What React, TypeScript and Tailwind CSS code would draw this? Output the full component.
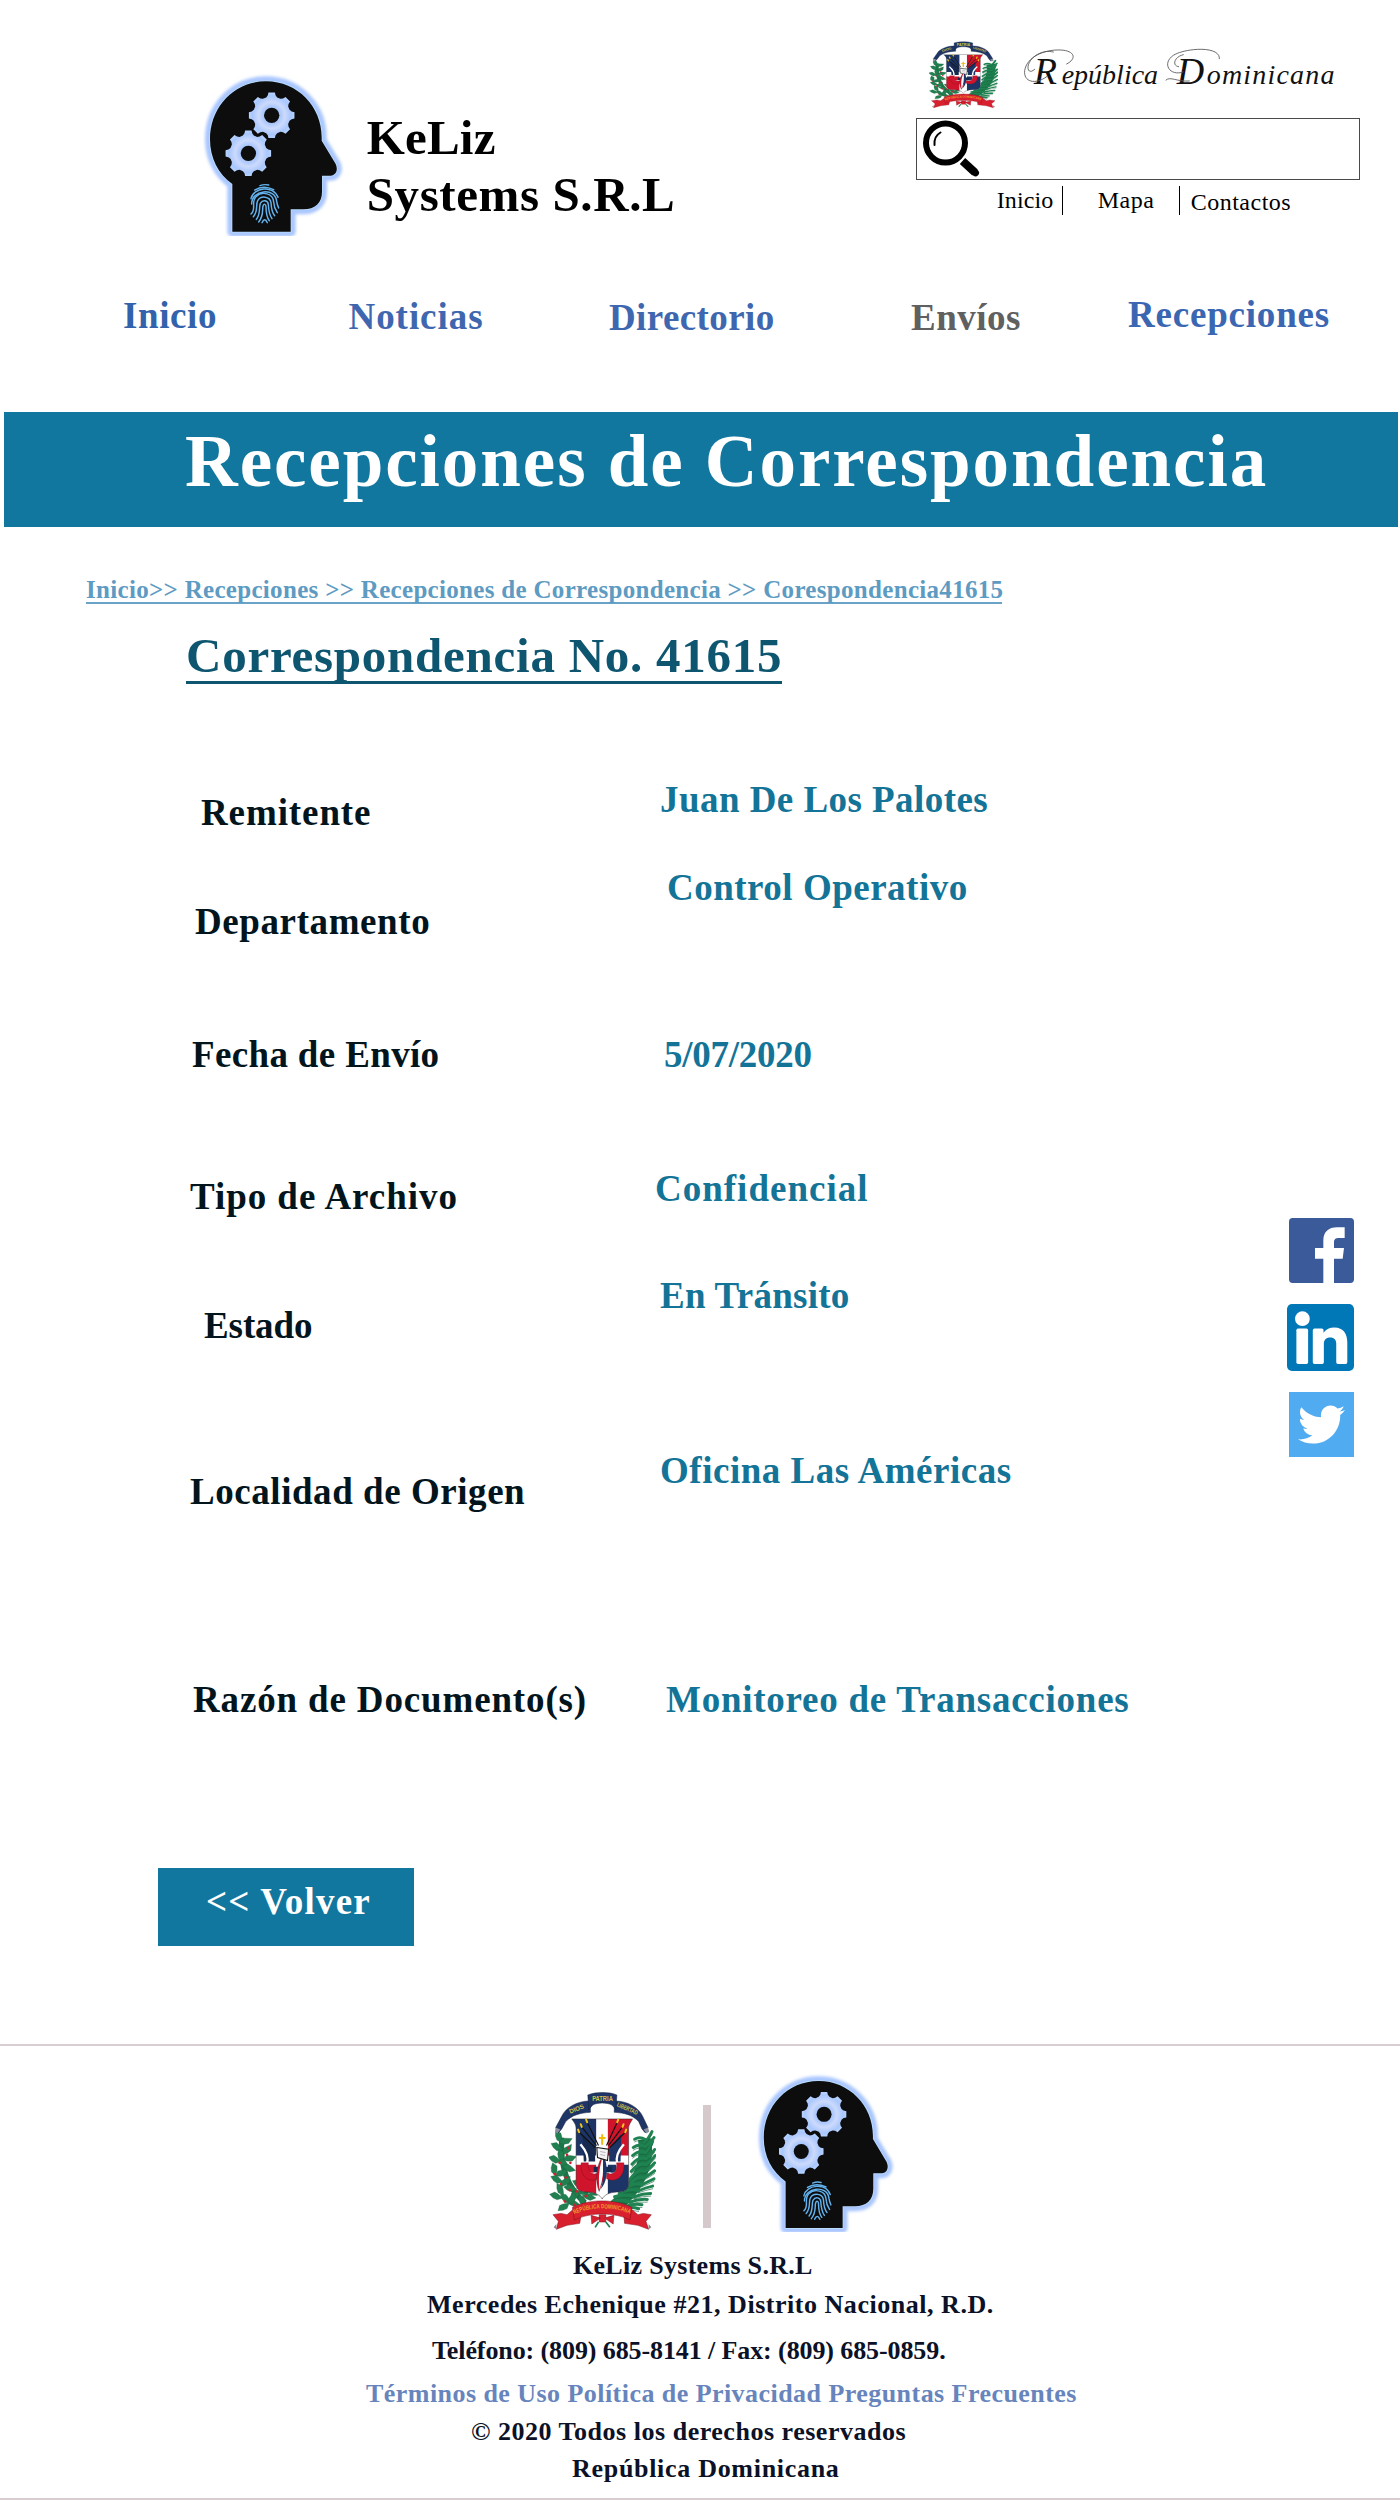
import { FaTwitter } from 'react-icons/fa';

function gearPath(cx: number, cy: number, outer: number, body: number) {
  const pts: string[] = [];
  const at = (r: number, deg: number) => {
    const a = (deg * Math.PI) / 180;
    return `${(cx + r * Math.cos(a)).toFixed(1)} ${(cy + r * Math.sin(a)).toFixed(1)}`;
  };
  for (let i = 0; i < 8; i++) {
    const d = i * 45;
    pts.push(`${at(body, d - 17)} L${at(outer - 8, d - 11)} L${at(outer, d - 8)} L${at(outer, d + 8)} L${at(outer - 8, d + 11)} L${at(body, d + 17)}`);
  }
  return `M${pts.join(' L')} Z`;
}

const HEAD =
  'M157 545 V402 C115 372 90 325 90 268 C90 170 163 94 258 94 C353 94 425 170 425 262 V272 L467 342 C475 360 468 376 452 377 H426 V425 C426 458 405 478 370 478 H332 V545 Z';

const RIDGES = [
  'M240 407 Q252 402 266 405',
  'M224 420 Q250 404 281 419',
  'M213 446 C220 412 280 404 294 442',
  'M215 462 C214 420 286 410 290 454 Q291 462 296 474',
  'M213 492 C230 478 212 456 228 440 C246 422 280 430 281 456 C282 474 288 482 292 488',
  'M220 500 C236 482 226 466 233 452 C242 436 270 438 273 458 C274 478 278 490 284 497',
  'M229 508 C243 490 236 472 241 460 C248 448 264 450 265 464 C266 484 268 494 276 506',
  'M236 516 C252 496 246 480 249 468 C252 460 258 462 258 470 C258 490 259 500 268 512',
  'M246 518 Q254 500 262 518',
];

function Gear({ cx, cy, id }: { cx: number; cy: number; id: string }) {
  return (
    <g>
      <defs>
        <radialGradient id={id} gradientUnits="userSpaceOnUse" cx={cx} cy={cy} r="68">
          <stop offset="0.33" stopColor="#a4c3fb" />
          <stop offset="0.58" stopColor="#ccdafc" />
          <stop offset="0.85" stopColor="#a9c7fd" />
          <stop offset="1" stopColor="#b5d2ff" />
        </radialGradient>
      </defs>
      <path d={gearPath(cx, cy, 69, 56)} fill={`url(#${id})`} stroke="#0d0d0d" strokeWidth="10" paintOrder="stroke" strokeLinejoin="round" />
      <circle cx={cx} cy={cy} r="23" fill="#0d0d0d" />
    </g>
  );
}

function HeadLogo({ className, id }: { className: string; id: string }) {
  return (
    <svg className={className} viewBox="60 60 440 497" preserveAspectRatio="none" aria-label="KeLiz Systems">
      <defs>
        <filter id={`${id}-glow`} x="-20%" y="-20%" width="140%" height="140%">
          <feGaussianBlur stdDeviation="5" />
        </filter>
      </defs>
      <path d={HEAD} fill="#a9c6ff" stroke="#a9c6ff" strokeWidth="30" strokeLinejoin="round" filter={`url(#${id}-glow)`} />
      <path d={HEAD} fill="#0d0d0d" stroke="#b9dcff" strokeWidth="5" paintOrder="stroke" />
      <Gear cx={275} cy={196} id={`${id}-g1`} />
      <Gear cx={205} cy={310} id={`${id}-g2`} />
      <g fill="none" stroke="#63b3ee" strokeWidth="4.4" strokeLinecap="round">
        {RIDGES.map((d) => (
          <path key={d} d={d} />
        ))}
      </g>
    </svg>
  );
}

const LEAVES: [number, number, number][] = [
  [42, 158, 60], [62, 170, -20], [36, 188, 30], [66, 196, -50], [48, 214, 70], [74, 222, -15], [30, 226, 20], [58, 240, 40],
  [28, 256, 75], [50, 266, -30], [72, 252, 20], [36, 286, 25], [62, 292, -50], [46, 316, 60], [76, 312, 10], [92, 330, -40],
  [34, 336, 15], [62, 344, 40], [100, 300, 30], [118, 322, -20], [84, 356, 15], [56, 368, -35], [112, 350, 55], [132, 338, 10],
  [128, 306, -60], [140, 322, 35], [82, 342, -70],
];
const BERRIES: [number, number][] = [
  [70, 192], [44, 236], [76, 236], [30, 270], [62, 280], [48, 300], [74, 318], [96, 322], [60, 352], [88, 362], [122, 336], [104, 312], [66, 212],
];
const FRONDS: [number, number, number, number][] = [
  [300, 150, 268, 165], [298, 158, 320, 142], [300, 172, 264, 190], [300, 172, 326, 160], [302, 190, 262, 214], [302, 190, 322, 172],
  [304, 208, 260, 240], [304, 208, 328, 196], [303, 226, 258, 262], [303, 226, 330, 214], [300, 246, 254, 286], [300, 246, 328, 236],
  [296, 266, 250, 306], [296, 266, 328, 260], [290, 286, 236, 318], [290, 286, 326, 284], [280, 304, 222, 328], [280, 304, 322, 306],
  [268, 322, 208, 338], [268, 322, 316, 328], [254, 338, 204, 352], [254, 338, 306, 346], [240, 352, 290, 362], [230, 360, 280, 374],
];
const SHIELD =
  'M80 104 H262 C256 116 250 120 250 134 V300 C250 318 236 324 214 324 C192 325 178 332 171 345 C164 332 150 325 128 324 C106 324 93 318 93 300 V134 C93 120 88 116 80 104 Z';

function CoatOfArms({ className, id }: { className: string; id: string }) {
  return (
    <svg className={className} viewBox="12 20 320 424" preserveAspectRatio="none" aria-label="Escudo de la República Dominicana">
      <defs>
        <clipPath id={`${id}-shield`}>
          <path d={SHIELD} />
        </clipPath>
        <path id={`${id}-arc`} d="M88 391 C130 367 210 367 256 391" />
      </defs>
      {/* laurel branch */}
      <path d="M50 160 C46 220 52 300 120 356" fill="none" stroke="#1c7547" strokeWidth="16" />
      {LEAVES.map(([x, y, r]) => (
        <path key={`${x}-${y}`} d="M-16 0 L-6 -8 L2 -6 L16 0 L4 8 L-6 6 Z" transform={`translate(${x} ${y}) rotate(${r}) scale(1.3)`} fill="#227f50" stroke="#135c37" strokeWidth="0.6" />
      ))}
      {BERRIES.map(([x, y]) => (
        <circle key={`${x}-${y}`} cx={x} cy={y} r="4" fill="#d0202c" />
      ))}
      {/* palm branch */}
      <path d="M298 165 C308 230 290 300 206 370" fill="none" stroke="#1d7a4a" strokeWidth="40" />
      {FRONDS.map(([x1, y1, x2, y2]) => (
        <g key={`${x1}-${y1}-${x2}`} fill="none" strokeLinecap="round">
          <path d={`M${x1} ${y1 + 16} Q${(x1 + x2) / 2} ${y1 + 6} ${x2} ${y2}`} stroke="#1f8351" strokeWidth="9" />
          <path d={`M${x1} ${y1 + 22} Q${(x1 + x2) / 2} ${y1 + 14} ${x2} ${y2 + 8}`} stroke="#145f3a" strokeWidth="1.8" />
        </g>
      ))}
      {/* shield */}
      <g clipPath={`url(#${id}-shield)`}>
        <rect x="78" y="100" width="190" height="250" fill="#fff" />
        <path d="M80 104 H153 V214 H80 Z" fill="#1d3566" />
        <path d="M188 104 H262 V214 H188 Z" fill="#cf142b" />
        <path d="M80 242 H153 V350 H80 Z" fill="#cf142b" />
        <path d="M188 242 H262 V350 H188 Z" fill="#1d3566" />
        <path d="M112 150 L150 190 V232 H116 Z" fill="#16294f" />
        <path d="M228 150 L192 190 V232 H226 Z" fill="#1d3566" />
        <path d="M106 180 C122 198 132 218 126 240 C120 262 136 278 154 264" fill="none" stroke="#fff" strokeWidth="7" />
        <path d="M236 180 C220 198 210 218 216 240 C222 262 206 278 190 264" fill="none" stroke="#fff" strokeWidth="7" />
        <path d="M108 236 C104 282 134 296 160 284 V266 C140 276 126 262 130 236 Z" fill="#cf142b" stroke="#7d0c1a" strokeWidth="1" />
        <path d="M236 236 C240 282 210 296 184 284 V266 C204 276 218 262 214 236 Z" fill="#cf142b" stroke="#7d0c1a" strokeWidth="1" />
        <path d="M146 248 H200 V264 H146 Z" fill="#16294f" />
      </g>
      <path d={SHIELD} fill="none" stroke="#222" strokeWidth="1.5" />
      {/* spears */}
      {[[102, 144, 150, 190], [110, 128, 154, 184], [126, 114, 160, 184], [240, 144, 194, 190], [232, 128, 190, 184], [216, 114, 184, 184]].map(([a, b, c, d]) => (
        <g key={a}>
          <path d={`M${a} ${b} L${c} ${d}`} stroke="#111" strokeWidth="3.5" />
          <path d={`M${a} ${b} l${a < 170 ? -3 : 3} -8`} stroke="#f5c518" strokeWidth="6" strokeLinecap="round" />
        </g>
      ))}
      <path d="M171 150 V182 M161 161 H181" stroke="#f2b90f" strokeWidth="6" />
      {/* bible and ribbon */}
      <path d="M166 226 C150 262 152 296 162 322 C170 300 184 280 178 226 Z" fill="#cf142b" stroke="#222" strokeWidth="1" />
      <path d="M170 226 C160 262 160 290 163 316 C172 290 176 260 174 226 Z" fill="#fff" />
      <path d="M174 226 C172 260 178 292 166 316 C184 296 190 262 180 226 Z" fill="#1d3566" />
      <path d="M155 190 L190 195 L187 229 L157 220 Z" fill="#f4f4f4" stroke="#111" strokeWidth="3" />
      <path d="M165 202 L181 205 M165 211 L180 214" stroke="#999" strokeWidth="2" />
      {/* motto ribbon */}
      <g fill="#1f3566" stroke="#131f3d" strokeWidth="1.5">
        <path d="M135 50 C95 50 62 70 50 96 L32 130 L40 146 L50 134 L62 112 C82 92 105 86 136 84 Z" />
        <path d="M208 50 C248 50 280 70 292 96 L308 130 L300 146 L290 134 L280 112 C262 92 238 86 207 84 Z" />
        <path d="M128 32 C150 22 194 22 215 32 L212 76 L200 62 C184 54 158 54 143 62 L131 76 Z" />
      </g>
      <path d="M32 130 L30 142 L37 148 L46 136 Z M308 130 L312 142 L304 148 L295 136 Z" fill="#8a8f99" />
      <g className="font-['Liberation_Sans'] text-[19px] font-bold" fill="#d3c24a" textAnchor="middle">
        <text x="96" y="80" transform="rotate(-22 96 78)">DIOS</text>
        <text x="172" y="50" textLength="62" lengthAdjust="spacingAndGlyphs">PATRIA</text>
        <text x="246" y="80" textLength="66" lengthAdjust="spacingAndGlyphs" transform="rotate(24 248 74)">LIBERTAD</text>
      </g>
      {/* country ribbon */}
      <g fill="#d8202f" stroke="#7d0c1a" strokeWidth="1.5">
        <path d="M84 376 L66 392 L48 388 L24 392 L40 412 L34 436 L66 424 L104 418 L108 392 Z" />
        <path d="M259 376 L278 392 L294 388 L318 392 L302 412 L310 436 L278 424 L238 418 L236 392 Z" />
        <path d="M138 394 L166 402 L140 420 Z M206 394 L178 402 L204 420 Z M162 392 H182 V414 H162 Z" />
        <path d="M82 370 C130 344 212 344 260 370 L254 408 C212 384 132 384 88 408 Z" />
      </g>
      <path d="M34 436 L26 430 L34 420 Z M310 436 L318 430 L310 420 Z" fill="#888" />
      <path d="M160 414 L150 430 M182 414 L194 430" stroke="#1f7f4f" strokeWidth="5" />
      <text className="font-['Liberation_Sans'] text-[19px] font-bold" fill="#f19a2b">
        <textPath href={`#${id}-arc`} textLength="170" lengthAdjust="spacingAndGlyphs">REPÚBLICA DOMINICANA</textPath>
      </text>
    </svg>
  );
}

function ScriptTitle() {
  return (
    <div className="relative ml-[26px] mt-[5px] flex h-[50px] w-[316px] items-baseline font-['Liberation_Serif',serif] text-[28px] italic leading-[50px] text-[#111]">
      <span className="ml-[10px] w-[28px] text-[38px]">R</span>
      <span className="w-[115px]">epública</span>
      <span className="w-[30px] text-[38px]">D</span>
      <span className="tracking-[1.2px]">ominicana</span>
      <svg className="absolute -top-[1px] left-0 h-[50px] w-[316px]" viewBox="372 95 948 150" fill="none" stroke="#555" strokeWidth="2.6" strokeLinecap="round">
        <path d="M440 190 C405 216 370 205 374 172 C380 132 430 108 482 110 C524 112 532 136 500 152" />
        <path d="M404 168 C380 190 374 150 405 128 C425 114 445 112 460 116" />
        <path d="M798 200 C812 188 830 206 868 203" />
        <path d="M850 176 C808 190 785 150 820 126 C855 104 962 96 958 136" />
        <path d="M836 160 C815 158 822 130 850 124" />
      </svg>
    </div>
  );
}

const nav = [
  { label: 'Inicio', cls: 'ml-[123px] w-[225.5px] mt-[2px] tracking-[0.6px] text-[#3262ab]' },
  { label: 'Noticias', cls: 'w-[260.5px] mt-[3px] tracking-[0.95px] text-[#3f67af]' },
  { label: 'Directorio', cls: 'w-[302px] mt-[4px] tracking-[0.4px] text-[#3f67af]' },
  { label: 'Envíos', cls: 'w-[217px] mt-[4px] tracking-[0.5px] text-[#606060]' },
  { label: 'Recepciones', cls: 'mt-px tracking-[0.8px] text-[#3b66b2]' },
];

const rows = [
  { label: 'Remitente', value: 'Juan De Los Palotes', row: 'h-[90px]', dt: 'mt-6 ml-[11px] tracking-[0.9px]', dd: 'mt-[11px] ml-[5px] tracking-[0.45px]' },
  { label: 'Departamento', value: 'Control Operativo', row: 'h-[160px]', dt: 'mt-[43px] ml-[5px] tracking-[0.6px]', dd: 'mt-[9px] ml-[12px] tracking-[0.5px]' },
  { label: 'Fecha de Envío', value: '5/07/2020', row: 'h-[140px]', dt: 'mt-4 ml-[2px] tracking-[0.35px]', dd: 'mt-4 ml-[9px] tracking-[-0.25px]' },
  { label: 'Tipo de Archivo', value: 'Confidencial', row: 'h-[100px]', dt: 'mt-[18px] ml-0 tracking-[0.95px]', dd: 'mt-[10px] ml-0 tracking-[1px]' },
  { label: 'Estado', value: 'En Tránsito', row: 'h-[170px]', dt: 'mt-[47px] ml-[14px] tracking-[-0.1px]', dd: 'mt-[17px] ml-[5px] tracking-[0.25px]' },
  { label: 'Localidad de Origen', value: 'Oficina Las Américas', row: 'h-[210px]', dt: 'mt-[43px] ml-0 tracking-[0.55px]', dd: 'mt-[22px] ml-[5px] tracking-[0.52px]' },
  { label: 'Razón de Documento(s)', value: 'Monitoreo de Transacciones', row: 'h-[120px]', dt: 'mt-[41px] ml-[3px] tracking-[0.85px]', dd: 'mt-[41px] ml-[11px] tracking-[0.75px]' },
];

export default function App() {
  return (
    <div className="flex h-[2500px] w-[1400px] flex-col overflow-hidden whitespace-nowrap bg-white font-['Liberation_Serif',serif] font-bold text-black">
      <header className="flex h-[295px] shrink-0">
        <HeadLogo id="top" className="ml-[200px] mt-[70px] h-[165.7px] w-[146.7px] shrink-0" />
        <h1 className="ml-[20px] mt-[109px] w-[549px] text-[49px] leading-[57px]">
          <span className="block tracking-[0.2px]">KeLiz</span>
          <span className="block tracking-[0.6px]">Systems S.R.L</span>
        </h1>
        <div className="w-[444px] font-normal">
          <div className="flex h-[118px] pl-[13px] pt-[41px]">
            <CoatOfArms id="arms-top" className="h-[68px] w-[69px] shrink-0" />
            <ScriptTitle />
          </div>
          <div className="flex h-[62px] items-start border border-[#4a4a4a] bg-white pl-[6px] pt-[1px]">
            <svg className="size-[58px]" viewBox="0 0 58 58" fill="none" stroke="#000">
              <circle cx="22.5" cy="23" r="19.5" strokeWidth="6" />
              <path d="M11.5 25 C11 19 13 15 17.5 12.5" strokeWidth="2" strokeLinecap="round" />
              <path d="M39.5 41 L52 52.5" strokeWidth="8" />
              <path d="M50 50.5 L52.5 52.8" strokeWidth="7" strokeLinecap="round" />
            </svg>
          </div>
          <nav className="flex text-2xl leading-none">
            <a className="ml-[81px] mt-[8px] w-[65px] tracking-[0.1px]">Inicio</a>
            <span className="mt-[6px] h-[29px] w-px bg-black" />
            <a className="ml-[35px] mt-[8px] w-[81px] tracking-[0.5px]">Mapa</a>
            <span className="mt-[6px] h-[29px] w-px bg-black" />
            <a className="ml-[11px] mt-[10px] tracking-[0.5px]">Contactos</a>
          </nav>
        </div>
      </header>

      <nav className="flex h-[117px] shrink-0 text-[37px] leading-none">
        {nav.map((n) => (
          <a key={n.label} className={n.cls}>{n.label}</a>
        ))}
      </nav>

      <h2 className="ml-[4px] flex h-[115px] w-[1394px] shrink-0 bg-[#12779e] pl-[181px] pt-[13px] text-[73px] leading-none tracking-[1.95px] text-white">
        Recepciones de Correspondencia
      </h2>

      <div className="ml-[86px] mt-[50px] h-[27px] w-[916px] shrink-0 border-b-2 border-[#6aa3c8] text-[25px] leading-[26px] tracking-[0.31px] text-[#5d9bc2]">
        Inicio&gt;&gt; Recepciones &gt;&gt; Recepciones de Correspondencia &gt;&gt; Corespondencia41615
      </div>
      <h3 className="ml-[186px] mt-[27px] h-[53px] w-[596px] shrink-0 border-b-[3px] border-[#0e5570] text-[49px] leading-none tracking-[0.75px] text-[#0e5570]">
        Correspondencia No. 41615
      </h3>

      <main className="mt-[86px] flex h-[990px] shrink-0 text-[37px] leading-none">
        <dl className="ml-[190px] w-[1097px]">
          {rows.map((r) => (
            <div key={r.label} className={`grid grid-cols-[465px_1fr] items-start ${r.row}`}>
              <dt className={`text-[#02141c] ${r.dt}`}>{r.label}</dt>
              <dd className={`text-[#137497] ${r.dd}`}>{r.value}</dd>
            </div>
          ))}
        </dl>
        <aside className="flex w-[67px] flex-col items-end pt-[448px]">
          <a aria-label="Facebook" className="block size-[65px]">
            <svg className="size-full" viewBox="87 54 195 195">
              <rect x="87" y="54" width="195" height="195" rx="11" fill="#3b5a9a" />
              <path d="M190 249 V176 H165 V144 H190 V122 C190 96 205 82 232 82 H254 V114 H238 C226 114 222 118 222 128 V144 H252 L248 176 H222 V249 Z" fill="#fff" />
            </svg>
          </a>
          <a aria-label="LinkedIn" className="mt-[21px] block size-[67px]">
            <svg className="size-full" viewBox="81 313 200 200">
              <rect x="81" y="313" width="200" height="200" rx="15" fill="#0077b7" />
              <g fill="#fff">
                <circle cx="127" cy="357" r="22" />
                <rect x="109" y="386" width="35" height="106" rx="5" />
                <path d="M158 391 q0 -5 5 -5 h22 q5 0 5 5 v8 C197 388 209 383 222 383 C250 383 261 402 261 428 V487 q0 5 -5 5 h-23 q-5 0 -5 -5 V432 C228 420 222 413 210 413 C197 413 191 421 191 432 V487 q0 5 -5 5 h-23 q-5 0 -5 -5 Z" />
              </g>
            </svg>
          </a>
          <a aria-label="Twitter" className="mt-[21px] flex size-[65px] items-center justify-center bg-[#50abf1] text-[47px] text-white">
            <FaTwitter />
          </a>
        </aside>
      </main>

      <button className="ml-[158px] mt-[108px] flex h-[78px] w-[256px] shrink-0 items-start bg-[#12779e] pl-[48px] pt-[15px] text-[37px] font-bold leading-none tracking-[1.2px] text-white">
        &lt;&lt; Volver
      </button>

      <footer className="mt-[98px] flex h-[456px] shrink-0 flex-col border-y-2 border-[#d8cdcf] text-[26px] leading-none text-[#0b1126]">
        <div className="flex h-[191px]">
          <CoatOfArms id="arms-foot" className="ml-[549px] mt-[45px] h-[141px] w-[107px]" />
          <span className="ml-[47px] mt-[59px] h-[123px] w-[7.5px] bg-[#d6c9cb]" />
          <HeadLogo id="foot" className="ml-[43px] mt-[24px] h-[162px] w-[143.4px]" />
        </div>
        <p className="ml-[573px] mt-[16px] tracking-[0.3px]">KeLiz Systems S.R.L</p>
        <p className="ml-[427px] mt-[13px] tracking-[0.53px]">Mercedes Echenique #21, Distrito Nacional, R.D.</p>
        <p className="ml-[432px] mt-5 tracking-[-0.1px]">Teléfono: (809) 685-8141 / Fax: (809) 685-0859.</p>
        <p className="ml-[366px] mt-[17px] tracking-[0.45px] text-[#6785bc]">Términos de Uso Política de Privacidad Preguntas Frecuentes</p>
        <p className="ml-[471px] mt-3 tracking-[0.52px]">© 2020 Todos los derechos reservados</p>
        <p className="ml-[572px] mt-[11px] tracking-[0.7px]">República Dominicana</p>
      </footer>
    </div>
  );
}
